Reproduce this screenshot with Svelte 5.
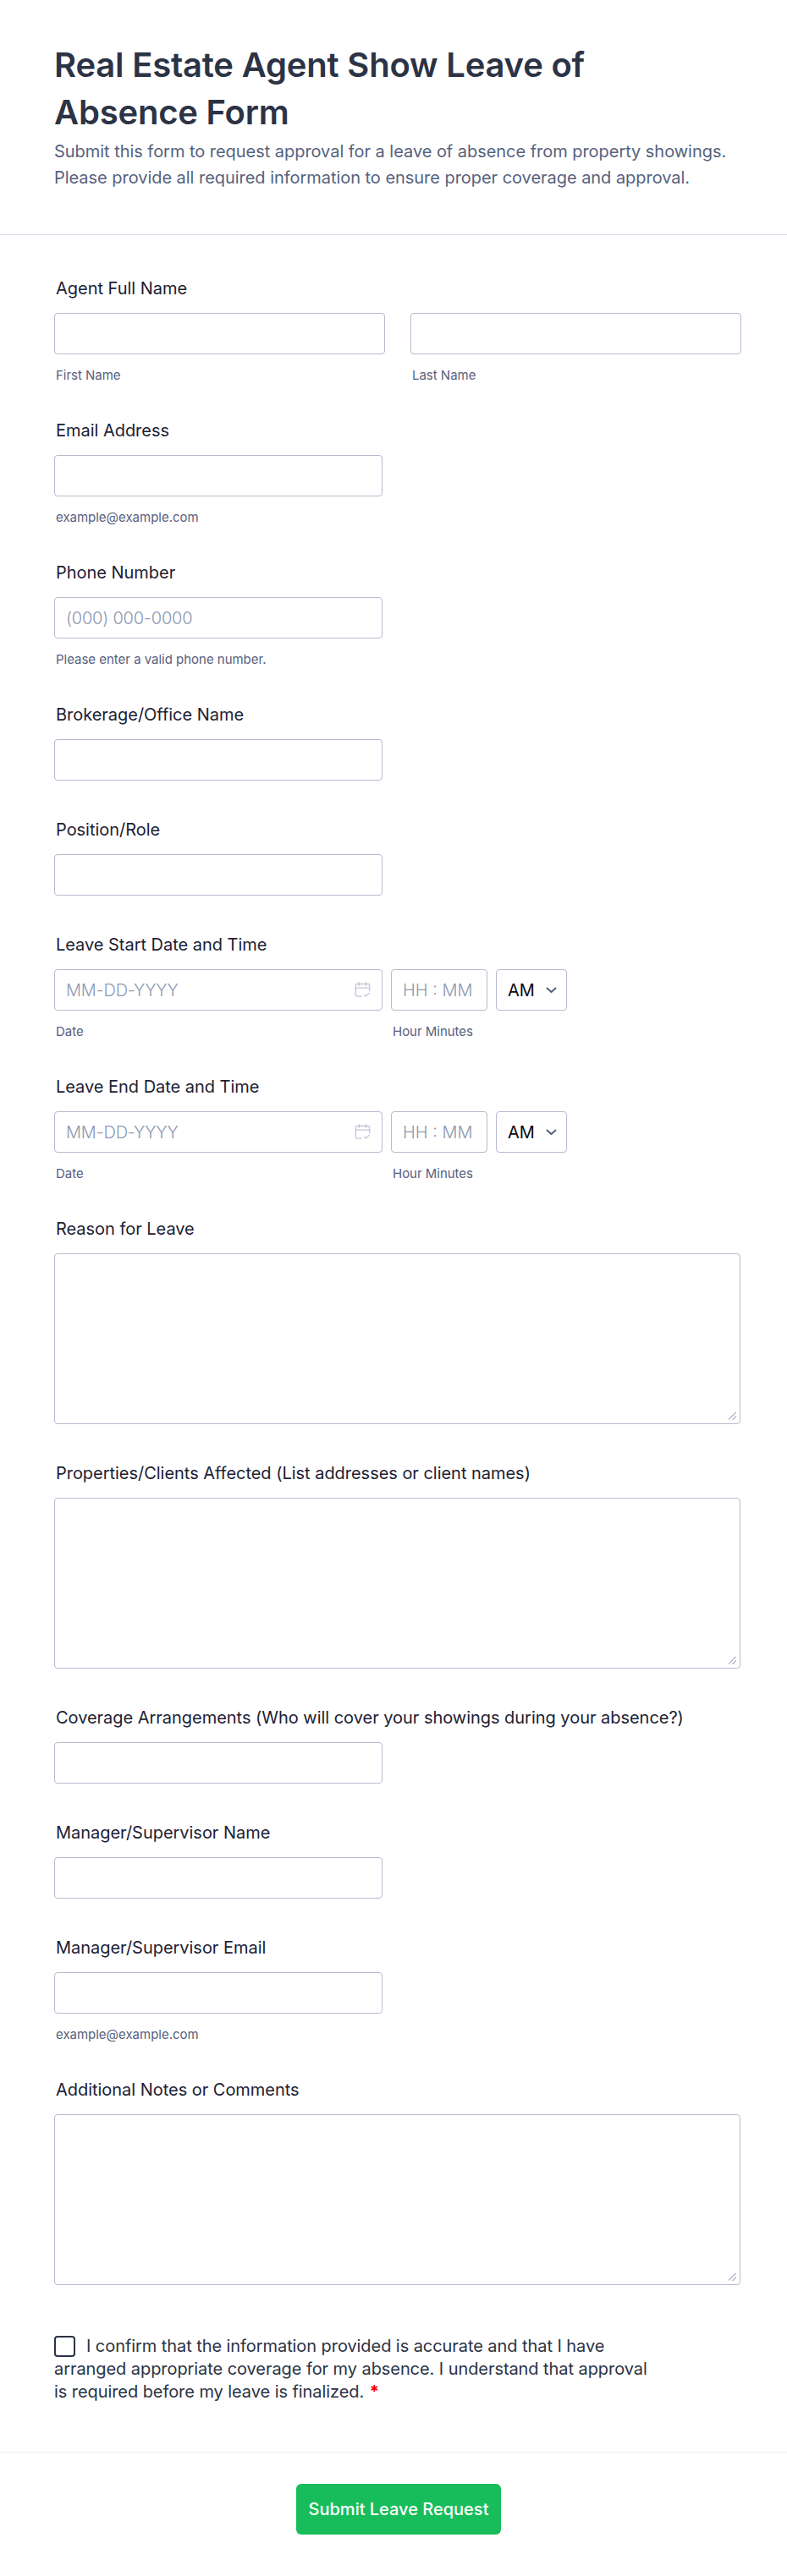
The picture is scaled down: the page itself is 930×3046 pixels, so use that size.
<script>
  const after = [
    { label: 'Reason for Leave' },
    { label: 'Properties/Clients Affected (List addresses or client names)' }
  ];
  const people = [
    { label: 'Coverage Arrangements (Who will cover your showings during your absence?)' },
    { label: 'Manager/Supervisor Name' },
    { label: 'Manager/Supervisor Email', sub: 'example@example.com' }
  ];
  const leave = ['Leave Start Date and Time', 'Leave End Date and Time'];
</script>

<main class="form">
  <header class="head">
    <h1>Real Estate Agent Show Leave of Absence Form</h1>
    <p>Submit this form to request approval for a leave of absence from property showings. Please provide all required information to ensure proper coverage and approval.</p>
  </header>

  <section class="fields">
    <div class="field">
      <div class="label">Agent Full Name</div>
      <div class="two">
        <div><div class="input wide"></div><div class="sub">First Name</div></div>
        <div><div class="input wide"></div><div class="sub">Last Name</div></div>
      </div>
    </div>

    <div class="field">
      <div class="label">Email Address</div>
      <div class="input short"></div>
      <div class="sub">example@example.com</div>
    </div>

    <div class="field">
      <div class="label">Phone Number</div>
      <div class="input short ph tight">(000) 000-0000</div>
      <div class="sub">Please enter a valid phone number.</div>
    </div>

    <div class="field">
      <div class="label">Brokerage/Office Name</div>
      <div class="input short"></div>
    </div>

    <div class="field">
      <div class="label">Position/Role</div>
      <div class="input short"></div>
    </div>

    {#each leave as title}
      <div class="field">
        <div class="label">{title}</div>
        <div class="dt">
          <div class="date-col">
            <div class="input ph date tight">
              <span>MM-DD-YYYY</span>
              <svg class="cal" width="21" height="21" viewBox="0 0 18 18" fill="none" stroke="#c3c8d6" stroke-width="1.2" stroke-linecap="round" stroke-linejoin="round">
                <path d="M8 15.5H3.5a1.5 1.5 0 0 1-1.5-1.5V4.500A1.5 1.5 0 0 1 3.5 3h11A1.5 1.5 0 0 1 16 4.500V10" />
                <path d="M2 7h14M5.500 1.500v3M12.500 1.500v3M10.800 14l1.600 1.500 3-3" />
              </svg>
            </div>
            <div class="sub">Date</div>
          </div>
          <div class="time-col">
            <div class="input ph time">HH : MM</div>
            <div class="sub">Hour Minutes</div>
          </div>
          <div class="input ampm">
            <span>AM</span>
            <svg width="13" height="8" viewBox="0 0 13 8" fill="none" stroke="#57607c" stroke-width="2" stroke-linecap="round" stroke-linejoin="round"><path d="M1.500 1.500 6.500 6l5-4.500" /></svg>
          </div>
        </div>
      </div>
    {/each}

    {#each after as f}
      <div class="field">
        <div class="label">{f.label}</div>
        <div class="input area"><i class="grip"></i></div>
      </div>
    {/each}

    {#each people as f}
      <div class="field">
        <div class="label">{f.label}</div>
        <div class="input short"></div>
        {#if f.sub}<div class="sub">{f.sub}</div>{/if}
      </div>
    {/each}

    <div class="field">
      <div class="label">Additional Notes or Comments</div>
      <div class="input area"><i class="grip"></i></div>
    </div>

    <div class="confirm">
      <span class="check"></span>I confirm that the information provided is accurate and that I have arranged appropriate coverage for my absence. I understand that approval is required before my leave is finalized. <span class="req">*</span>
    </div>
  </section>

  <footer class="foot">
    <button type="button">Submit Leave Request</button>
  </footer>
</main>

<style>
  :global(body) { margin: 0; background: #fff; }
  .form { width: 930px; height: 3046px; font-family: Inter, "Liberation Sans", sans-serif; color: #2c3345; box-sizing: border-box; }
  .head { height: 278px; box-sizing: border-box; padding: 49px 64px 0; border-bottom: 1px solid #d8dae9; }
  h1 { margin: 0; font-size: 40px; line-height: 56px; font-weight: 600; width: 700px; color: #2c3345; letter-spacing: -0.2px; }
  p { margin: 3px 0 0; font-size: 20px; line-height: 31px; color: #56627e; letter-spacing: -0.04px; }
  .fields { padding: 48px 55px 0 64px; height: 2621px; box-sizing: border-box; }
  .field { margin-bottom: 43px; }
  .label { font-size: 20px; line-height: 28px; font-weight: 400; color: #1c2133; padding-top: 1px; margin: 0 0 15px 2px; letter-spacing: -0.03px; }
  .input { box-sizing: border-box; height: 49px; border: 1px solid #b6bbce; border-radius: 4px; background: #fff; font-size: 20px; display: flex; align-items: center; }
  .wide { width: 391px; }
  .short { width: 388px; }
  .ph { color: #8d99b0; padding-left: 13px; font-weight: 300; }
  .tight { letter-spacing: -0.2px; }
  .two { display: flex; gap: 30px; }
  .sub { font-size: 15px; line-height: 14px; color: #57607c; margin: 18px 0 0 2px; letter-spacing: -0.02px; }
  .dt { display: flex; gap: 10px; }
  .date { width: 388px; justify-content: space-between; padding-right: 12px; }
  .cal { flex: none; }
  .time { width: 114px; }
  .ampm { width: 84px; color: #09090f; padding: 0 11px 0 13px; justify-content: space-between; }
  .area { width: 811px; height: 202px; position: relative; }
  .grip { position: absolute; right: 4px; bottom: 4px; width: 9px; height: 9px; background: linear-gradient(135deg, transparent 0 40%, #b6bbce 40% 52%, transparent 52% 68%, #b6bbce 68% 80%, transparent 80%); }
  .confirm { width: 705px; margin-top: 59px; font-size: 20px; line-height: 27px; color: #2c3345; letter-spacing: -0.07px; }
  .check { display: inline-block; box-sizing: border-box; width: 25px; height: 25px; border: 2px solid #2c3345; border-radius: 4px; margin-right: 13px; vertical-align: -6px; }
  .req { color: #f50000; font-weight: 700; margin-left: 1px; }
  .foot { border-top: 1px solid #e8e9f0; display: flex; justify-content: center; padding: 37px 0 0 12px; height: 147px; box-sizing: border-box; }
  button { width: 242px; height: 60px; border: 0; border-radius: 6px; background: #18bd5b; color: #fff; font: 500 20px Inter, sans-serif; }
</style>
